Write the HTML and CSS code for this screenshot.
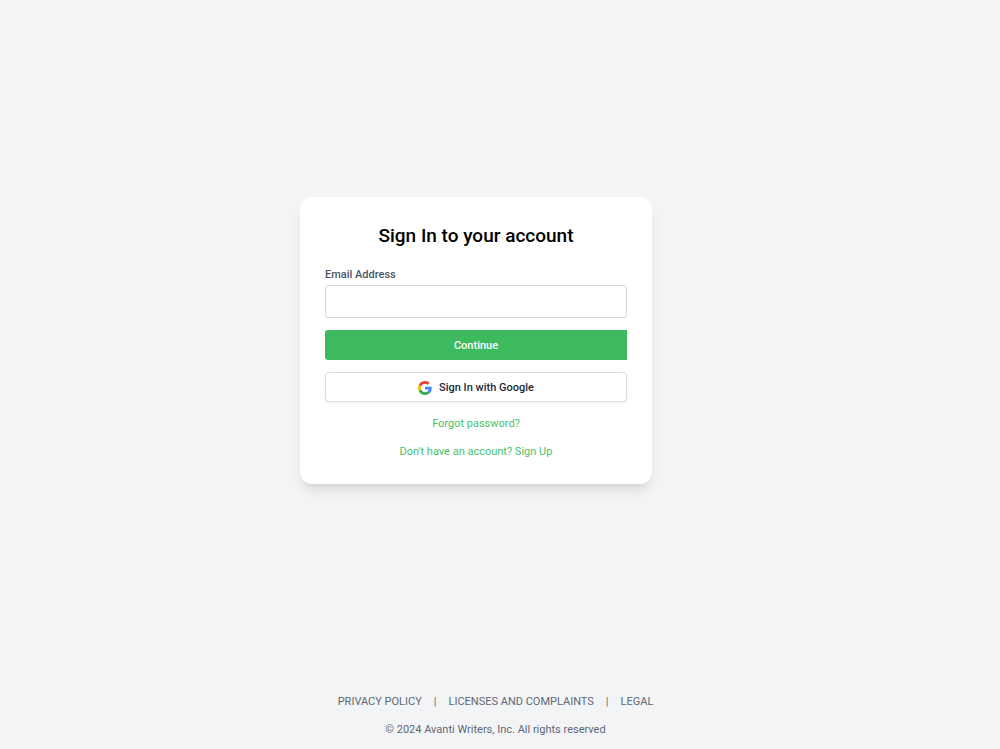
FILE: index.html
```html
<!DOCTYPE html>
<html lang="en">
<head>
    <meta charset="UTF-8">
    <meta name="viewport" content="width=device-width, initial-scale=1.0">
    <title>Sign In - Avanti Writers</title>
    <link rel="stylesheet" href="styles.css">
</head>
<body>
    <main class="page">
        <form class="card">
            <h1 class="title">Sign In to your account</h1>
            <label class="label" for="email">Email Address</label>
            <input class="input" type="email" id="email" name="email">
            <button class="btn btn-primary" type="submit">Continue</button>
            <button class="btn btn-google" type="button">
                <svg class="google-icon" viewBox="0 0 48 48" aria-hidden="true">
                    <path fill="#EA4335" d="M24 9.5c3.54 0 6.71 1.22 9.21 3.6l6.85-6.85C35.9 2.38 30.47 0 24 0 14.62 0 6.51 5.38 2.56 13.22l7.98 6.19C12.43 13.72 17.74 9.5 24 9.5z"/>
                    <path fill="#4285F4" d="M46.98 24.55c0-1.57-.15-3.09-.38-4.55H24v9.02h12.94c-.58 2.96-2.26 5.48-4.78 7.18l7.73 6c4.51-4.18 7.09-10.36 7.09-17.65z"/>
                    <path fill="#FBBC05" d="M10.53 28.59c-.48-1.45-.76-2.99-.76-4.59s.27-3.14.76-4.59l-7.98-6.19C.92 16.46 0 20.12 0 24c0 3.88.92 7.54 2.56 10.78l7.97-6.19z"/>
                    <path fill="#34A853" d="M24 48c6.48 0 11.93-2.13 15.89-5.81l-7.73-6c-2.15 1.45-4.92 2.3-8.16 2.3-6.26 0-11.57-4.22-13.47-9.91l-7.98 6.19C6.51 42.62 14.62 48 24 48z"/>
                </svg>
                Sign In with Google
            </button>
            <div class="links">
                <a href="#">Forgot password?</a>
                <a href="#">Don't have an account? Sign Up</a>
            </div>
        </form>
    </main>
    <footer class="footer">
        <nav class="footer-nav">
            <a href="#">PRIVACY POLICY</a>
            <span>|</span>
            <a href="#">LICENSES AND COMPLAINTS</a>
            <span>|</span>
            <a href="#">LEGAL</a>
        </nav>
        <p class="copyright">© 2024 Avanti Writers, Inc. All rights reserved</p>
    </footer>
</body>
</html>
```
FILE: styles.css
```css
* {
    box-sizing: border-box;
}
body {
    display: flex;
    flex-direction: column;
    min-height: 100vh;
    margin: 0;
    background-color: #f2f4f6;
    font-family: Roboto, sans-serif;
    font-size: 11px;
    line-height: 20px;
}
a {
    text-decoration: none;
}
.page {
    display: flex;
    flex: 1;
    align-items: center;
    justify-content: center;
    padding-right: 48px;
}
.card {
    display: flex;
    flex-direction: column;
    width: 100%;
    max-width: 352px;
    padding: 24px 25px 22px;
    border-radius: 12px;
    background-color: white;
    box-shadow: 0 9px 13px -3px rgba(0, 0, 0, 0.1), 0 4px 5px -2px rgba(0, 0, 0, 0.05);
}
.title {
    margin: 0 0 14px;
    font-size: 19px;
    font-weight: 500;
    line-height: 30px;
    text-align: center;
}
.label {
    color: #4a5568;
    font-weight: 500;
}
.input {
    width: 100%;
    height: 33px;
    margin-bottom: 12px;
    padding: 0 10px;
    border: 1px solid #d5d8df;
    border-radius: 3px;
    background-color: white;
    font: inherit;
}
.btn {
    display: flex;
    align-items: center;
    justify-content: center;
    gap: 7px;
    height: 30px;
    margin-bottom: 12px;
    padding: 2px 0 0;
    font: inherit;
    font-weight: 500;
    cursor: pointer;
}
.btn-primary {
    border: none;
    border-radius: 3px 0 0 3px;
    background-color: #3dba5e;
    color: white;
}
.btn-google {
    border: 1px solid #dcdee4;
    border-radius: 4px;
    background-color: white;
    color: #1f2937;
    box-shadow: 0 1px 2px rgba(0, 0, 0, 0.08);
}
.google-icon {
    width: 14px;
    height: 14px;
}
.links {
    display: flex;
    flex-direction: column;
    align-items: center;
    gap: 8px;
}
.links a {
    color: #48c168;
}
.footer {
    padding: 11px 9px 9px 0;
    color: #5f6775;
    text-align: center;
}
.footer a {
    color: inherit;
}
.footer-nav {
    display: flex;
    flex-wrap: wrap;
    justify-content: center;
    gap: 8px 12px;
    margin-bottom: 8px;
}
.copyright {
    margin: 0;
}
```
